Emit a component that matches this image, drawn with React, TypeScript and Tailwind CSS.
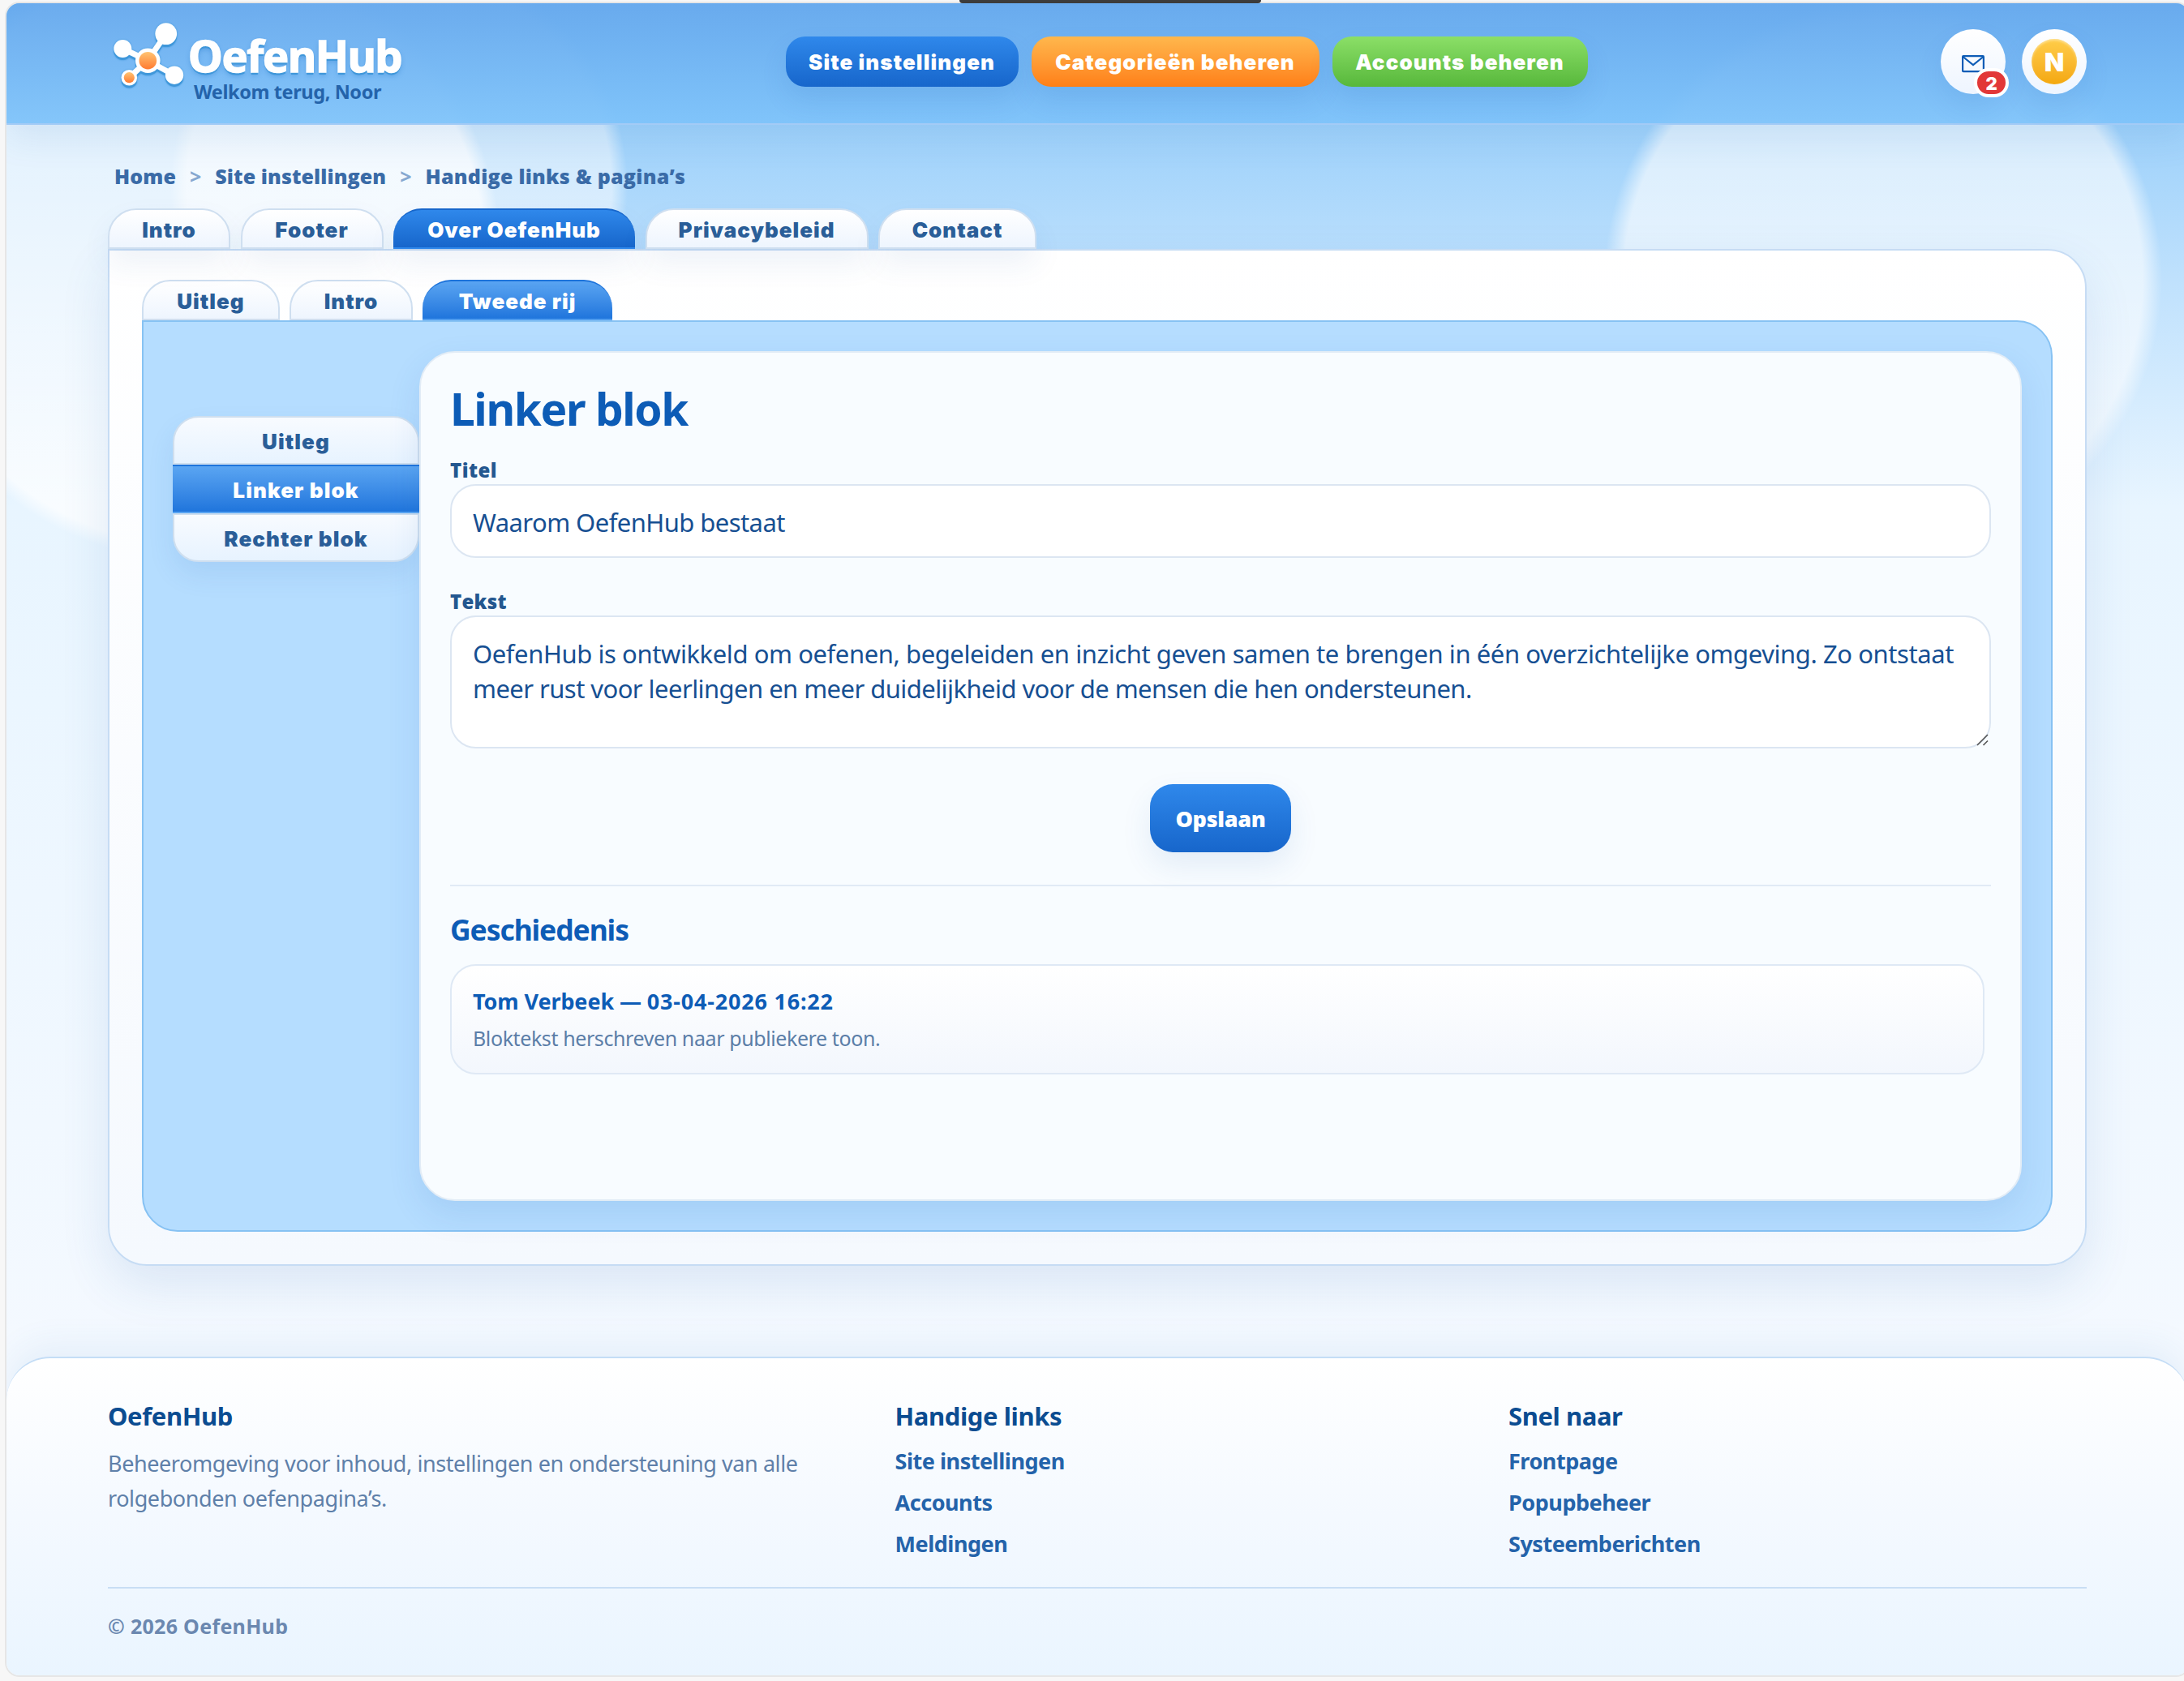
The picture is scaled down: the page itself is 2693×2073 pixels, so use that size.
import * as React from 'react';

const tabs = [
  { label: 'Intro', width: 'w-[151px]' },
  { label: 'Footer', width: 'w-[176px]' },
  { label: 'Over OefenHub', width: 'w-[298px]', active: true },
  { label: 'Privacybeleid', width: 'w-[275px]' },
  { label: 'Contact', width: 'w-[195px]' },
];

const subTabs = [
  { label: 'Uitleg', width: 'w-[170px]' },
  { label: 'Intro', width: 'w-[152px]' },
  { label: 'Tweede rij', width: 'w-[234px]', active: true },
];

const usefulLinks = ['Site instellingen', 'Accounts', 'Meldingen'];
const quickLinks = ['Frontpage', 'Popupbeheer', 'Systeemberichten'];

const heavy = "font-['Inter','Liberation_Sans',sans-serif] font-black";
const label = "font-['Open_Sans','Noto_Sans',sans-serif] font-extrabold";

function Logo() {
  return (
    <div className="flex w-[400px]">
      <svg
        className="mt-[20px] h-[86px] w-[97px] shrink-0 overflow-visible [filter:drop-shadow(0_3px_0_#3f97da)_drop-shadow(0_0_1px_#3f97da)]"
        viewBox="133 24 97 86"
      >
        <defs>
          <linearGradient id="orange" x1="0" y1="0" x2="0" y2="1">
            <stop offset="0" stopColor="#ffc473" />
            <stop offset="1" stopColor="#ff7a30" />
          </linearGradient>
        </defs>
        <g stroke="#fff" strokeWidth="7">
          <path d="M182.3 74.7L204.7 41.7M182.3 74.7L151.3 60M182.3 74.7L159.3 95.7M182.3 74.7L215 92.7" />
        </g>
        <g fill="#fff">
          <circle cx="204.7" cy="41.7" r="13.4" />
          <circle cx="151.3" cy="60" r="11" />
          <circle cx="182.3" cy="74.7" r="15.3" />
          <circle cx="159.3" cy="95.7" r="9.8" />
          <circle cx="215" cy="92.7" r="11.2" />
        </g>
        <circle cx="182.3" cy="74.7" r="10.8" fill="url(#orange)" />
        <circle cx="159.3" cy="95.7" r="6.6" fill="url(#orange)" />
      </svg>
      <div className="mt-[37px] ml-[2px] flex flex-col">
        <span className="text-[54px] leading-[54px] font-bold tracking-[-1.3px] text-white [-webkit-text-stroke:1.5px_#fff] [text-shadow:0_3px_0_#3f97da,0_0_2px_#3f97da,0_4px_6px_rgba(40,120,200,0.4)]">
          OefenHub
        </span>
        <span className="mt-[4px] ml-[7px] text-[23.5px] leading-[28px] font-bold tracking-[-0.4px] text-[#2463aa]">Welkom terug, Noor</span>
      </div>
    </div>
  );
}

function Header() {
  return (
    <header className="relative z-10 flex h-[150px] shrink-0 items-start justify-between border-b-2 border-[#a3cbf6] bg-[linear-gradient(180deg,rgba(103,169,237,0.96),rgba(126,195,250,0.94))] pr-[126px] pl-[125px] shadow-[0_16px_40px_rgba(40,110,180,0.11)]">
      <Logo />
      <nav className={`mt-[41px] flex gap-4 text-[26px] tracking-[1.1px] text-white ${heavy}`}>
        <a className="flex h-[62px] w-[287px] items-center justify-center rounded-[24px] bg-linear-to-b from-[#2f88eb] to-[#1766cb] pt-[1px] shadow-[0_16px_32px_rgba(40,100,180,0.12)]">
          Site instellingen
        </a>
        <a className="flex h-[62px] w-[355px] items-center justify-center rounded-[24px] bg-linear-to-b from-[#ffb74c] to-[#ff7f15] pt-[1px] shadow-[0_16px_32px_rgba(40,100,180,0.12)]">
          Categorieën beheren
        </a>
        <a className="flex h-[62px] w-[315px] items-center justify-center rounded-[24px] bg-linear-to-b from-[#8bdf67] to-[#57b83b] pt-[1px] shadow-[0_16px_32px_rgba(40,100,180,0.12)]">
          Accounts beheren
        </a>
      </nav>
      <div className="mt-[32px] flex gap-5">
        <div className="relative flex size-20 items-center justify-center rounded-full bg-linear-to-b from-white to-[#eef5ff] shadow-[0_16px_32px_rgba(40,100,180,0.1)]">
          <svg className="mt-[5px] h-[22px] w-[28px]" viewBox="0 0 28 22" fill="none" stroke="#0d5cb6" strokeWidth="2.2">
            <rect x="1.1" y="1.1" width="25.8" height="19" rx="0.8" />
            <path d="M1.5 2L14 12L26.5 2" />
          </svg>
          <span className={`absolute top-[48px] left-[41px] flex h-[36px] w-[43px] items-center justify-center rounded-full border-4 border-white bg-[#e23838] pt-[2px] text-[22px] text-white ${heavy}`}>
            2
          </span>
        </div>
        <div className="flex size-20 items-center justify-center rounded-full bg-linear-to-b from-white to-[#eef5ff] shadow-[0_16px_32px_rgba(40,100,180,0.1)]">
          <span className={`flex size-14 items-center justify-center rounded-full bg-linear-to-b from-[#ffcd48] to-[#f4a80c] pt-[2px] text-[32px] text-white shadow-[inset_0_2px_3px_rgba(255,255,255,0.4)] ${heavy}`}>
            N
          </span>
        </div>
      </div>
    </header>
  );
}

function Tab({ label, width, active, sub }: { label: string; width: string; active?: boolean; sub?: boolean }) {
  const idle = 'border-2 border-[#cfdff0] bg-linear-to-b from-white to-[#eef5fe] text-[#2a5e98]';
  const on = sub
    ? 'border-y-2 border-t-[#1f75dc] border-b-[#4f9cee] bg-linear-to-b from-[#5aa5f2] to-[#1f75dc] text-white'
    : 'border-y-2 border-t-[#1766cb] border-b-[#2f88eb] bg-linear-to-b from-[#2f88eb] to-[#1766cb] text-white';
  return (
    <div
      className={`flex h-[50px] items-center justify-center rounded-t-[35px] pt-[3px] text-[26px] tracking-[1px] ${heavy} ${width} ${active ? on : idle} ${sub ? '' : 'shadow-[0_18px_36px_rgba(40,90,170,0.08)]'}`}
    >
      {label}
    </div>
  );
}

function SideNav() {
  return (
    <div className={`mt-[80px] h-[180px] w-[304px] rounded-[32px] text-center text-[26px] leading-[60px] tracking-[1.1px] text-[#2a5e98] shadow-[0_16px_32px_rgba(40,100,180,0.1)] ${heavy}`}>
      <div className="h-[60px] rounded-t-[32px] border-2 border-[#cfdfef] bg-linear-to-b from-[#f8fbff] to-[#e7f3ff]">Uitleg</div>
      <div className="h-[60px] border-y-2 border-t-[#1f75dc] border-b-[#5aa5f2] bg-linear-to-b from-[#5aa5f2] to-[#1f75dc] text-white">Linker blok</div>
      <div className="h-[60px] rounded-b-[32px] border-2 border-[#cfdfef] bg-linear-to-b from-[#f8fbff] to-[#e7f3ff]">Rechter blok</div>
    </div>
  );
}

function Editor() {
  return (
    <section className="flex h-[1048px] w-[1976px] flex-col rounded-[44px] border-2 border-[#e2ecf6] bg-[#f8fcff] pt-[36px] pl-[36px] shadow-[0_16px_40px_rgba(40,100,180,0.12)]">
      <h1 className="text-[55px] leading-[66px] font-bold tracking-[-1.4px] text-[#0d5cb6]">Linker blok</h1>

      <label className={`mt-[27px] text-[24px] leading-[32px] tracking-[0.5px] text-[#24578f] ${label}`}>Titel</label>
      <input
        className="mt-[1px] h-[91px] w-[1900px] rounded-[32px] border-2 border-[#dce6f2] bg-white px-[26px] pt-[2px] text-[31px] tracking-[-0.56px] text-[#164f92]"
        defaultValue="Waarom OefenHub bestaat"
      />

      <label className={`mt-[38px] text-[24px] leading-[32px] tracking-[0.3px] text-[#24578f] ${label}`}>Tekst</label>
      <div className="relative mt-[1px] flex h-[164px] w-[1900px] flex-col rounded-[32px] border-2 border-[#dce6f2] bg-white px-[26px] pt-[24px] text-[31px] leading-[43px] whitespace-nowrap text-[#164f92]">
        <span className="tracking-[-0.42px]">
          OefenHub is ontwikkeld om oefenen, begeleiden en inzicht geven samen te brengen in één overzichtelijke omgeving. Zo ontstaat
        </span>
        <span className="tracking-[-0.56px]">
          meer rust voor leerlingen en meer duidelijkheid voor de mensen die hen ondersteunen.
        </span>
        <svg className="absolute right-[1px] bottom-[1px] size-[15px]" viewBox="0 0 15 15" stroke="#555" strokeWidth="1.6">
          <path d="M1 14L14 1M8.5 14L14 8.5" />
        </svg>
      </div>

      <div className="mt-[44px] flex w-[1900px] justify-center">
        <button className={`h-[84px] w-[174px] rounded-[28px] bg-linear-to-b from-[#2f88eb] to-[#1766cb] pt-[2px] text-[27px] tracking-[-0.3px] text-white shadow-[0_16px_36px_rgba(40,100,180,0.1)] ${label}`}>
          Opslaan
        </button>
      </div>

      <div className="mt-[40px] h-[2px] w-[1900px] shrink-0 bg-[#e1eaf5]" />

      <h2 className="mt-[31px] text-[35.5px] leading-[44px] font-bold tracking-[-1.1px] text-[#0d5cb6]">Geschiedenis</h2>
      <div className="mt-[21px] flex h-[136px] w-[1892px] flex-col rounded-[32px] border-2 border-[#dfe9f5] bg-linear-to-b from-white to-[#f3f7fd] pt-[26px] pl-[26px]">
        <div className="text-[27px] leading-[36px] font-bold text-[#0d5cb6]">
          <span className="tracking-[-0.1px]">Tom Verbeek — </span>
          <span className="tracking-[0.8px]">03-04-2026 16:22</span>
        </div>
        <span className="mt-[10px] text-[25px] leading-[34px] tracking-[-0.4px] text-[#5b7ea8]">Bloktekst herschreven naar publiekere toon.</span>
      </div>
    </section>
  );
}

function FooterLinks({ title, links }: { title: string; links: string[] }) {
  return (
    <div className="flex flex-col">
      <h3 className="text-[31px] leading-[40px] font-bold tracking-[-0.4px] text-[#0b4c91]">{title}</h3>
      <ul className="mt-[10px] text-[27px] leading-[51px] font-bold tracking-[-0.47px] text-[#2463aa]">
        {links.map((link) => (
          <li key={link}>{link}</li>
        ))}
      </ul>
    </div>
  );
}

function Footer() {
  return (
    <footer className="mt-[112px] h-[393px] shrink-0 rounded-t-[54px] border-t-2 border-[#c4ddf6] bg-[linear-gradient(180deg,#ffffff,#f4f9ff_50%,#eaf5ff)] pt-[51px] pr-[126px] pl-[125px] shadow-[0_-16px_40px_rgba(40,110,180,0.07)]">
      <div className="grid h-[203px] grid-cols-[970.5px_756.5px_1fr]">
        <div>
          <h3 className="text-[31px] leading-[40px] font-bold tracking-[-0.4px] text-[#0b4c91]">OefenHub</h3>
          <p className="mt-[17px] text-[27px] leading-[43px] tracking-[-0.42px] whitespace-nowrap text-[#5f80a9]">
            Beheeromgeving voor inhoud, instellingen en ondersteuning van alle
            <br />
            rolgebonden oefenpagina’s.
          </p>
        </div>
        <FooterLinks title="Handige links" links={usefulLinks} />
        <FooterLinks title="Snel naar" links={quickLinks} />
      </div>
      <div className="mt-[28px] h-[2px] bg-[#c8def4]" />
      <p className="mt-[29px] text-[25px] leading-[34px] font-bold tracking-[0.3px] text-[#6b88b0]">© 2026 OefenHub</p>
    </footer>
  );
}

function App() {
  return (
    <div className="relative h-[2073px] w-[2693px] overflow-hidden bg-[#f7f7f7] pt-[4px] pl-[8px] font-['Noto_Sans','Open_Sans',sans-serif]">
      <div className="absolute top-0 left-[1183px] h-[4px] w-[372px] rounded-b-[8px] bg-[#3c3c3c]" />
      <div className="flex h-[2062px] w-[2691px] flex-col overflow-hidden rounded-[16px] bg-[radial-gradient(circle_at_484px_226px,rgba(255,255,255,0.52)_262px,transparent_282px),radial-gradient(circle_at_233px_311px,rgba(255,255,255,0.72)_357px,transparent_377px),radial-gradient(circle_at_2314px_341px,rgba(255,255,255,0.62)_320px,transparent_344px),linear-gradient(180deg,#90caf9_0,#a6d5fb_200px,#bfe1fd_340px,#e8f5ff_620px,#eef7ff_1100px,#f4f9ff_1660px)] shadow-[0_0_0_2px_#e6e6e6]">
        <Header />
        <main className="ml-[125px] w-[2440px] shrink-0">
          <div className={`mt-[47px] flex gap-[17px] pl-[8px] text-[25px] leading-[32px] tracking-[0.1px] whitespace-nowrap text-[#3a6ba7] ${label}`}>
            <span>Home</span>
            <span className="font-bold text-[#86a8d0]">&gt;</span>
            <span>Site instellingen</span>
            <span className="font-bold text-[#86a8d0]">&gt;</span>
            <span className="tracking-[0.25px]">Handige links &amp; pagina’s</span>
          </div>
          <div className="relative z-10 mt-[24px] flex gap-[12.5px]">
            {tabs.map((tab) => (
              <Tab key={tab.label} {...tab} />
            ))}
          </div>
          <div className="h-[1254px] rounded-[48px] rounded-tl-none border-2 border-[#c6dcf4] bg-linear-to-b from-white to-[#f5f9fe] pt-[36px] pl-[40px] shadow-[0_24px_60px_rgba(40,100,170,0.12)]">
            <div className="flex gap-[12px]">
              {subTabs.map((tab) => (
                <Tab key={tab.label} {...tab} sub />
              ))}
            </div>
            <div className="flex h-[1124px] w-[2356px] rounded-[44px] rounded-tl-none border-2 border-[#87c2f3] bg-[#b5ddff] pt-[36px] pl-[36px]">
              <SideNav />
              <Editor />
            </div>
          </div>
        </main>
        <Footer />
      </div>
    </div>
  );
}

export default App;
